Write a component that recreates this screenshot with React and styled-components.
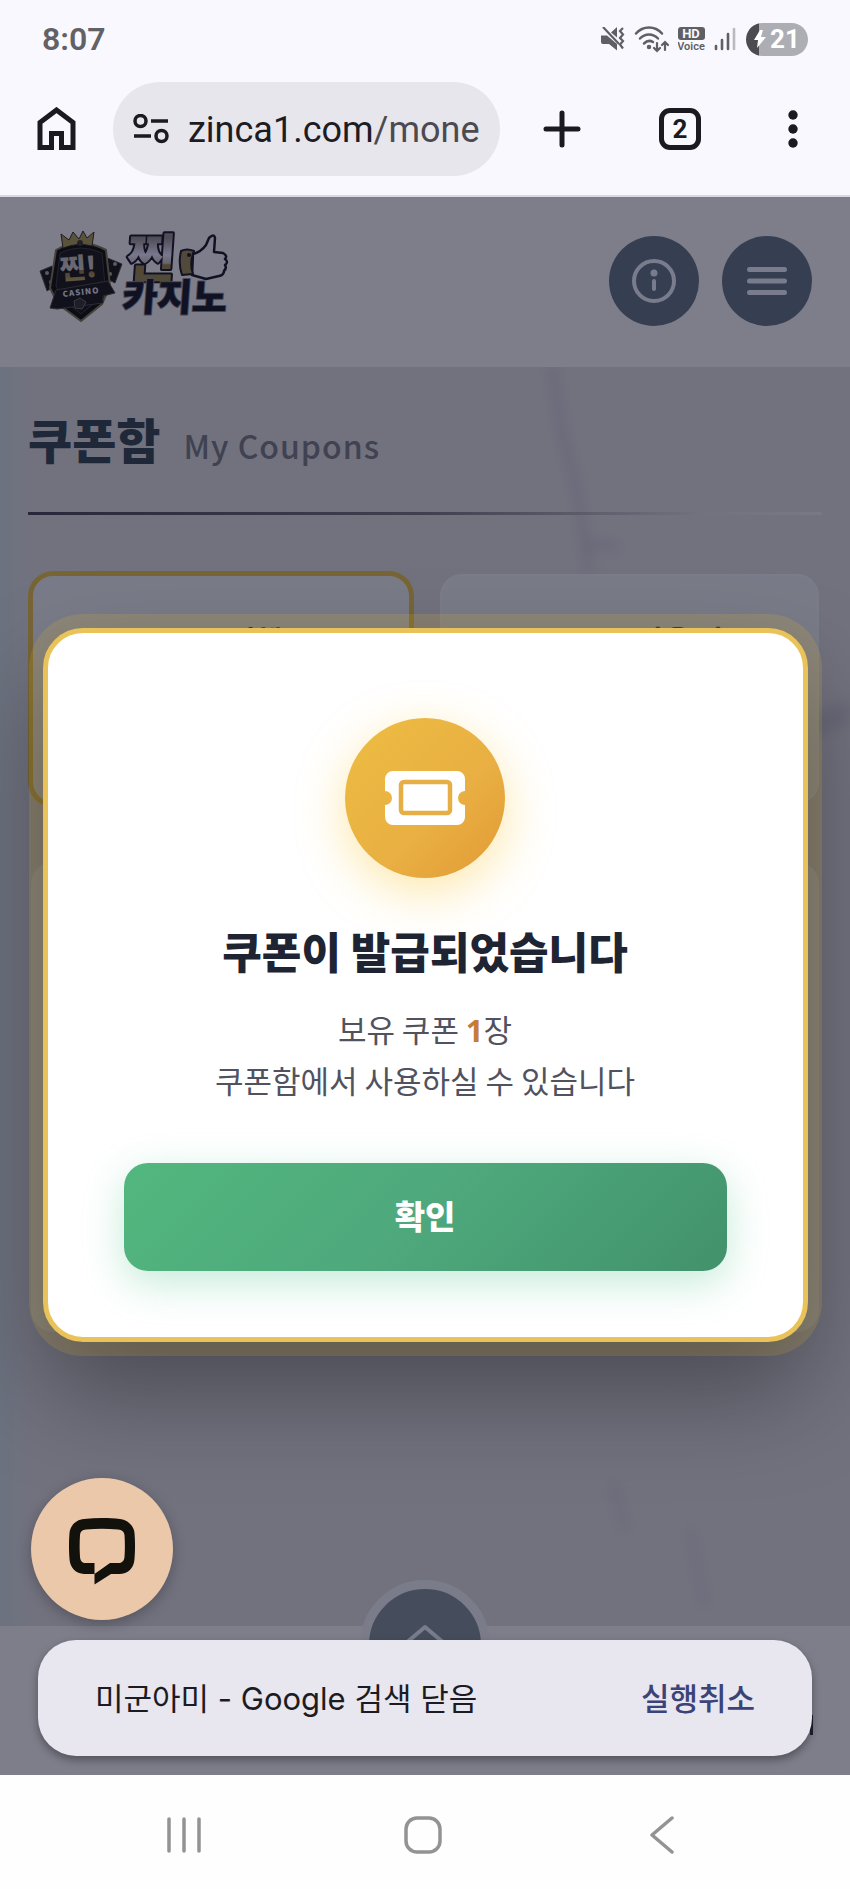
import React from "react";
import styled, { createGlobalStyle, css } from "styled-components";

const GlobalStyle = createGlobalStyle`
  * {
    box-sizing: border-box;
  }
  body {
    margin: 0;
    background: #ffffff;
    font-family: "Noto Sans CJK KR", "Noto Sans", sans-serif;
  }
  button {
    margin: 0;
    padding: 0;
    border: 0;
    background: none;
    font: inherit;
    color: inherit;
    cursor: pointer;
  }
  h1, h2, p {
    margin: 0;
  }
  svg {
    display: block;
    flex-shrink: 0;
  }
`;

/* ---------- icons ---------- */

const MuteIcon = () => (
  <svg width="25" height="24" viewBox="0 0 25 24" fill="#5f5f64">
    <path d="M0 8.500h6L16 17v6.500L8 17H2a2 2 0 0 1-2-2z" />
    <path d="M10 5.500 16 0v10.500z" />
    <path d="M2 0 18 17" stroke="#5f5f64" strokeWidth="2.200" />
    <path d="M22 1l-3 3 3 3.500-3 3.500 3 3-3 3.500 3 4" fill="none" stroke="#5f5f64" strokeWidth="2.200" />
  </svg>
);

const WifiIcon = () => (
  <svg width="36" height="27" viewBox="0 0 36 27" fill="none" stroke="#5f5f64" strokeWidth="2.500" strokeLinecap="round">
    <path d="M2 7.500C9-.5 21-.5 28 7.500" />
    <path d="M6 12.500c5-5.500 13-5.500 18 0" />
    <path d="M10 17.500c3-3 6.500-3 9-1.500" />
    <circle cx="15" cy="21" r="1" fill="#5f5f64" />
    <path d="M23 17v8M20 22l3 3 3-3M31 24v-8M28 19l3-3 3 3" strokeWidth="2.200" />
  </svg>
);

const HdVoiceIcon = () => (
  <svg width="28" height="28" viewBox="0 0 28 28" fontFamily="Roboto, sans-serif">
    <rect x="0" y="2" width="27" height="13" rx="3" fill="#5f5f64" />
    <text x="13" y="13" textAnchor="middle" fontSize="13" fontWeight="700" fill="#f9f8ff">HD</text>
    <text x="13" y="25" textAnchor="middle" fontSize="11" fontWeight="600" fill="#5f5f64">Voice</text>
  </svg>
);

const SignalIcon = () => (
  <svg width="24" height="24" viewBox="0 0 24 24" strokeWidth="2.600" strokeLinecap="round" stroke="#5f5f64">
    <path d="M2 19v3M8 13v9M14 7v15" />
    <path d="M20 2v20" stroke="#b9b9c0" />
  </svg>
);

const BoltIcon = () => (
  <svg width="12" height="18" viewBox="0 0 12 18" fill="#ffffff">
    <path d="M6 0 0 10h4L3 18 12 7H7l2-7z" />
  </svg>
);

const HomeIcon = () => (
  <svg width="39" height="44" viewBox="0 0 39 44" fill="none" stroke="#1b1a20" strokeWidth="5">
    <path d="M3 15.500 19.500 3 36 15.500V40.500H24.500V26.500H14.500V40.500H3z" />
  </svg>
);

const SiteSettingsIcon = () => (
  <svg width="36" height="30" viewBox="0 0 36 30" fill="none" stroke="#1b1a20" strokeWidth="3.500">
    <circle cx="7.500" cy="7" r="5.500" />
    <path d="M18 7h17M1 22h17" />
    <circle cx="28.500" cy="22" r="5.500" />
  </svg>
);

const PlusIcon = () => (
  <svg width="38" height="38" viewBox="0 0 38 38" stroke="#1b1a20" strokeWidth="5" strokeLinecap="round">
    <path d="M19 3v32M3 19h32" />
  </svg>
);

const MoreIcon = () => (
  <svg width="26" height="40" viewBox="0 0 26 40" fill="#1b1a20">
    <circle cx="14" cy="6" r="4.700" />
    <circle cx="14" cy="20" r="4.700" />
    <circle cx="14" cy="34" r="4.700" />
  </svg>
);

const InfoIcon = () => (
  <svg width="44" height="44" viewBox="0 0 44 44" fill="none" stroke="#f0f8ff" strokeWidth="4">
    <circle cx="22" cy="22" r="20" />
    <path d="M22 22v8" strokeLinecap="round" />
    <circle cx="22" cy="14" r="3.500" fill="#f0f8ff" stroke="none" />
  </svg>
);

const MenuIcon = () => (
  <svg width="40" height="30" viewBox="0 0 40 30" stroke="#f0f8ff" strokeWidth="5" strokeLinecap="round">
    <path d="M2.500 3.500h35M2.500 15h35M2.500 26.500h35" />
  </svg>
);

const TicketIcon = () => (
  <svg width="80" height="54" viewBox="0 0 80 54">
    <path
      fill="#ffffff"
      d="M8 0h64a8 8 0 0 1 8 8v12a7 7 0 0 0 0 14v12a8 8 0 0 1-8 8H8a8 8 0 0 1-8-8V34a7 7 0 0 0 0-14V8a8 8 0 0 1 8-8z"
    />
    <rect x="16" y="11" width="49" height="31" rx="3" fill="none" stroke="#e6af46" strokeWidth="4.500" />
  </svg>
);

const ChatIcon = () => (
  <svg width="66" height="68" viewBox="0 0 66 68">
    <path
      fill="#12110c"
      fillRule="evenodd"
      d="M15 1C27-.3 40-.3 51 1 59 2 65 8 65.500 15 66.200 24 66.200 32 65.500 41 65 50 59 56 50 56H42L25.500 66.500V56H15C7 55.500 1 50 .5 41-.2 32-.2 24 .5 15 1 8 7 1.500 15 1zM17 11.500C13 12 11.500 13.500 11 17 10.500 25 10.500 31 11 39 11.500 43 13 45 17 45H25.500V56L41 45H49C53 45 55 43 55.500 39 56 31 56 25 55.500 17 55 13.500 53 12 49 11.500 38 10.500 28 10.500 17 11.500z"
    />
  </svg>
);

const ChevronUpIcon = () => (
  <svg width="60" height="30" viewBox="0 0 60 30" fill="none" stroke="#f0f8ff" strokeWidth="4" strokeLinecap="round" strokeLinejoin="round">
    <path d="M4 26 30 4l26 22" />
  </svg>
);

const RecentsIcon = () => (
  <svg width="36" height="36" viewBox="0 0 36 36" stroke="#939396" strokeWidth="3.500" strokeLinecap="round">
    <path d="M3 2v32M18 2v32M33 2v32" />
  </svg>
);

const NavHomeIcon = () => (
  <svg width="38" height="38" viewBox="0 0 38 38" fill="none" stroke="#939396" strokeWidth="3.500">
    <rect x="2" y="2" width="34" height="34" rx="11" />
  </svg>
);

const BackIcon = () => (
  <svg width="24" height="38" viewBox="0 0 24 38" fill="none" stroke="#939396" strokeWidth="3.500" strokeLinecap="round" strokeLinejoin="round">
    <path d="M22 2 2 19l20 17" />
  </svg>
);

const Logo = () => (
  <svg
    width="196"
    height="150"
    viewBox="38 204 196 150"
    fontFamily="Noto Sans CJK KR, sans-serif"
    fontWeight="900"
    role="img"
    aria-label="찐카지노"
  >
    <defs>
      <linearGradient id="badgeGold" gradientUnits="userSpaceOnUse" x1="0" y1="251" x2="0" y2="279">
        <stop offset="0" stopColor="#c8c4bc" />
        <stop offset="0.6" stopColor="#d6d3cc" />
        <stop offset="0.62" stopColor="#94844a" />
        <stop offset="1" stopColor="#c4b26a" />
      </linearGradient>
      <linearGradient id="wordGold" gradientUnits="userSpaceOnUse" x1="0" y1="236" x2="0" y2="278">
        <stop offset="0" stopColor="#a09a94" />
        <stop offset="0.4" stopColor="#f2efff" />
        <stop offset="0.6" stopColor="#d0cac0" />
        <stop offset="0.64" stopColor="#a08d4c" />
        <stop offset="1" stopColor="#a59558" />
      </linearGradient>
    </defs>
    {/* dice */}
    <g fill="#20221c" stroke="#5a5a50" strokeWidth="1">
      <path d="M40 269l12-5 6 18-11 7z" />
      <path d="M105 255l17 7-7 19-14-7z" />
    </g>
    <g fill="#b5b3ae">
      <circle cx="47" cy="271" r="2" />
      <circle cx="51" cy="280" r="2" />
      <circle cx="115" cy="262" r="2" />
      <circle cx="110" cy="272" r="2" />
    </g>
    {/* shield */}
    <path d="M56 248q24-14 50 0l4 36-8 18-21 17-23-17-8-16z" fill="#181812" stroke="#8d8459" strokeWidth="2" />
    <path d="M60 251q20-10 42 0l3 32-7 15-17 14-18-14-7-14z" fill="#22231c" stroke="#45463b" strokeWidth="1" />
    {/* crown */}
    <path d="M63 246l-2-14 8 6 4-8 6 7 4-8 4 7 7-6-2 14q-14-4-29 2z" fill="#b5a75f" stroke="#3d3824" strokeWidth="1" />
    <circle cx="80" cy="241" r="3" fill="#4a4530" />
    <text x="60" y="276" fontSize="28" fill="url(#badgeGold)" transform="rotate(-4 80 268)">찐!</text>
    {/* ribbon */}
    <path d="M50 306l6-18 52-9 7 12-12 3v7l-46 6z" fill="#20221c" stroke="#54564f" strokeWidth="1" />
    <text x="81" y="293" fontSize="8" textAnchor="middle" letterSpacing="1" fill="#e9e9f2" transform="rotate(-6 81 290)">
      CASINO
    </text>
    <path d="M74 299l6-3 6 4-4 7-7-1z" fill="#3a3c36" stroke="#77746a" strokeWidth="1" />
    {/* word mark */}
    <g strokeLinejoin="round">
      <text x="126" y="275" fontSize="52" fill="url(#wordGold)" stroke="#22232c" strokeWidth="4" paintOrder="stroke" transform="skewX(-4) translate(19 0)">
        찐
      </text>
      <path
        d="M193 252q8-2 13-9l3-7q5-5 6 0l-1 14 9 1q5 3 2 6 4 3 0 6 2 3-1 6 0 4-5 5l-13 3-14-4z"
        fill="#fbfbff"
        stroke="#22232c"
        strokeWidth="2.500"
      />
      <path d="M181 249q6-3 13 0-5 12-1 23l-11 1q-4-11-1-24z" fill="#a3935a" stroke="#22232c" strokeWidth="2" />
      <circle cx="189" cy="253" r="2" fill="#22232c" />
      <text x="122" y="309" fontSize="38" fill="#20222a" stroke="#8e9199" strokeWidth="2" paintOrder="stroke" transform="skewX(-4) translate(21 0)">
        카지노
      </text>
    </g>
  </svg>
);

/* ---------- page ---------- */

const App = () => (
  <>
    <GlobalStyle />
    <Phone>
      <StatusBar>
        <Clock>8:07</Clock>
        <StatusIcons>
          <MuteIcon />
          <WifiIcon />
          <HdVoiceIcon />
          <SignalIcon />
          <Battery>
            <BoltIcon />
            21
          </Battery>
        </StatusIcons>
      </StatusBar>

      <Toolbar>
        <button aria-label="홈">
          <HomeIcon />
        </button>
        <AddressBar>
          <SiteSettingsIcon />
          <Address>
            zinca1.com<span>/mone</span>
          </Address>
        </AddressBar>
        <ToolbarActions>
          <button aria-label="새 탭">
            <PlusIcon />
          </button>
          <TabsButton>2</TabsButton>
          <button aria-label="메뉴">
            <MoreIcon />
          </button>
        </ToolbarActions>
      </Toolbar>

      <Viewport>
        <Marble viewBox="0 0 850 1578" preserveAspectRatio="none" aria-hidden="true">
          <g fill="none" stroke="#d2d2d8" strokeWidth="9" strokeLinecap="round">
            <path d="M553 172l8 60 16 60 8 55 5 25" />
            <path d="M585 347l30 2" />
            <path d="M614 1290l10 40" strokeWidth="10" stroke="#d8d8dc" />
            <path d="M690 1335l6 30 8 40" strokeWidth="8" stroke="#d8d8dc" />
            <path d="M850 515l-40 14" strokeWidth="24" />
          </g>
        </Marble>

        <Header>
          <Logo />
          <HeaderButtons>
            <RoundButton aria-label="안내">
              <InfoIcon />
            </RoundButton>
            <RoundButton aria-label="전체 메뉴">
              <MenuIcon />
            </RoundButton>
          </HeaderButtons>
        </Header>

        <Section>
          <SectionTitle>
            쿠폰함 <small>My Coupons</small>
          </SectionTitle>
          <Divider />
          <Cards>
            <Card $active>진행</Card>
            <Card>사용 완</Card>
          </Cards>
          <Panel />
        </Section>

        <Footer>
          <UpButton aria-label="맨 위로">
            <ChevronUpIcon />
          </UpButton>
          <FooterMark />
        </Footer>

        <Overlay>
          <Modal role="dialog" aria-labelledby="coupon-title">
            <CouponBadge>
              <TicketIcon />
            </CouponBadge>
            <ModalTitle id="coupon-title">쿠폰이 발급되었습니다</ModalTitle>
            <ModalText>
              보유 쿠폰 <strong>1</strong>장
              <br />
              쿠폰함에서 사용하실 수 있습니다
            </ModalText>
            <ConfirmButton>확인</ConfirmButton>
          </Modal>
        </Overlay>

        <Floating>
          <ChatButton aria-label="채팅">
            <ChatIcon />
          </ChatButton>
          <Toast>
            <p>미군아미 - Google 검색 닫음</p>
            <UndoButton>실행취소</UndoButton>
          </Toast>
        </Floating>
      </Viewport>

      <NavBar>
        <button aria-label="최근 앱">
          <RecentsIcon />
        </button>
        <button aria-label="홈 화면">
          <NavHomeIcon />
        </button>
        <button aria-label="뒤로">
          <BackIcon />
        </button>
      </NavBar>
    </Phone>
  </>
);

export default App;

const Phone = styled.div`
  display: flex;
  flex-direction: column;
  min-height: 100vh;
`;

const StatusBar = styled.div`
  display: flex;
  align-items: center;
  justify-content: space-between;
  height: 78px;
  padding: 0 42px;
  background: #f9f8ff;
`;

const Clock = styled.span`
  font: 600 32px/40px Roboto, sans-serif;
  color: #616166;
`;

const StatusIcons = styled.div`
  display: flex;
  align-items: center;
  gap: 8px;
`;

const Battery = styled.span`
  display: flex;
  align-items: center;
  justify-content: center;
  gap: 4px;
  width: 62px;
  height: 33px;
  border-radius: 17px;
  background: linear-gradient(90deg, #4b4b50 21%, #adadb4 21%);
  color: #ffffff;
  font: 700 26px/33px Roboto, sans-serif;
`;

const Toolbar = styled.div`
  display: flex;
  align-items: center;
  height: 119px;
  padding: 2px 45px 18px 37px;
  background: #f9f8ff;
  border-bottom: 2px solid #d8d8e2;
`;

const AddressBar = styled.div`
  display: flex;
  flex: 1;
  align-items: center;
  gap: 19px;
  min-width: 0;
  height: 94px;
  margin: 0 43px 0 37px;
  padding: 0 12px 0 20px;
  border-radius: 47px;
  background: #e7e6ec;
`;

const Address = styled.span`
  padding-top: 3px;
  white-space: nowrap;
  font: 400 36px/48px Roboto, sans-serif;
  color: #1d1c22;

  span {
    color: #4b4a50;
  }
`;

const ToolbarActions = styled.div`
  display: flex;
  align-items: center;
  gap: 78px;
`;

const TabsButton = styled.button`
  && {
    width: 42px;
    height: 42px;
    border: 5px solid #1b1a20;
    border-radius: 11px;
    color: #1b1a20;
    font: 700 26px/32px Roboto, sans-serif;
  }
`;

const Viewport = styled.main`
  position: relative;
  display: flex;
  flex: 1;
  flex-direction: column;
  overflow: hidden;
  background: linear-gradient(90deg, #d8e4e4, #e4e5e4 30px);
`;

const Marble = styled.svg`
  position: absolute;
  inset: 0;
  width: 100%;
  height: 100%;
  filter: blur(6px);
`;

const Header = styled.header`
  position: relative;
  display: flex;
  align-items: center;
  justify-content: space-between;
  height: 170px;
  padding: 0 38px 2px;
  background: #fdfdfd;
`;

const HeaderButtons = styled.div`
  display: flex;
  gap: 23px;
`;

const RoundButton = styled.button`
  display: grid;
  place-items: center;
  width: 90px;
  height: 90px;
  && {
    border-radius: 50%;
    background: #6c7e88;
  }
`;

const Section = styled.section`
  position: relative;
  padding: 36px 28px 0;
`;

const SectionTitle = styled.h1`
  display: flex;
  align-items: baseline;
  gap: 23px;
  height: 72px;
  font-size: 48px;
  font-weight: 900;
  line-height: 70px;
  color: #3e5058;

  small {
    font-size: 32px;
    font-weight: 500;
    line-height: 40px;
    letter-spacing: 1px;
    color: #808488;
  }
`;

const Divider = styled.div`
  height: 3px;
  margin: 37px 0 59px;
  background: linear-gradient(90deg, #50505a, #808088 50%, #e4e5e4 85%, #f2f2f2);
`;

const Cards = styled.div`
  display: grid;
  grid-template-columns: 1fr 1fr;
  gap: 29px;
  padding: 0 3px;
`;

const Card = styled.div`
  height: 230px;
  padding: 42px 0 0 196px;
  border: 2px solid #f4f8f6;
  border-radius: 22px;
  background: #f2f6f6;
  font-size: 29px;
  font-weight: 700;
  color: #404850;

  ${({ $active }) =>
    $active &&
    css`
      border-color: #eeca50;
      box-shadow: 0 0 0 3px #eeca50;
    `}
`;

const Panel = styled.div`
  height: 470px;
  margin: 58px 3px 0;
  border-radius: 22px;
  background: #f2f6f6;
`;

const Footer = styled.footer`
  position: relative;
  display: flex;
  align-items: flex-end;
  justify-content: flex-end;
  height: 149px;
  margin-top: auto;
  padding: 0 37px 40px;
  background: #fdfdfd;
`;

const UpButton = styled.button`
  position: absolute;
  top: -46px;
  left: 50%;
  display: flex;
  justify-content: center;
  width: 130px;
  height: 130px;
  transform: translateX(-50%);
  && {
    padding-top: 34px;
    border: 9px solid #f6f8fa;
    border-radius: 50%;
    background: #8a9aa0;
  }
`;

const FooterMark = styled.i`
  width: 3px;
  height: 20px;
  background: #404048;
`;

const Overlay = styled.div`
  position: absolute;
  inset: 0;
  display: grid;
  place-items: center;
  padding-bottom: 2px;
  background: rgba(0, 0, 26, 0.5);
`;

const Modal = styled.div`
  width: 90%;
  padding: 85px 76px 66px;
  border: 5px solid #eac25a;
  border-radius: 40px;
  background: #ffffff;
  box-shadow:
    0 0 0 14px rgba(250, 200, 30, 0.14),
    0 50px 100px rgba(0, 0, 0, 0.35);
  text-align: center;
`;

const CouponBadge = styled.div`
  display: grid;
  place-items: center;
  width: 160px;
  height: 160px;
  margin: 0 auto 42px;
  border-radius: 50%;
  background: linear-gradient(135deg, #edbd42, #e9af42 60%, #e29a35);
  box-shadow: 0 14px 50px rgba(250, 195, 40, 0.4);
`;

const ModalTitle = styled.h2`
  font-size: 43px;
  font-weight: 900;
  line-height: 60px;
  color: #1f2433;
`;

const ModalText = styled.p`
  && {
    margin: 24px 0 58px;
  }
  font-size: 31px;
  line-height: 50px;
  color: #50535f;

  strong {
    font-family: "Noto Sans", sans-serif;
    font-weight: 700;
    color: #c67c35;
  }
`;

const ConfirmButton = styled.button`
  width: 100%;
  height: 108px;
  && {
    padding-bottom: 4px;
    border-radius: 24px;
    background: linear-gradient(135deg, #52b77e, #4ea87c 50%, #42926b);
    box-shadow: 0 12px 40px rgba(60, 190, 130, 0.3);
    font-size: 33px;
    font-weight: 900;
    color: #ffffff;
  }
`;

const Floating = styled.div`
  position: absolute;
  right: 0;
  bottom: 0;
  left: 0;
  padding: 0 38px 19px 31px;
`;

const ChatButton = styled.button`
  display: grid;
  place-items: center;
  width: 142px;
  height: 142px;
  && {
    margin-bottom: 20px;
    padding-top: 6px;
    border-radius: 50%;
    background: #ecc8aa;
    box-shadow: 0 4px 14px rgba(0, 0, 0, 0.25);
  }
`;

const Toast = styled.div`
  display: flex;
  align-items: center;
  justify-content: space-between;
  height: 116px;
  margin-left: 7px;
  padding: 2px 57px 0;
  border-radius: 38px;
  background: #e8e6ee;
  box-shadow: 0 4px 8px rgba(0, 0, 0, 0.35);
  font-family: Inter, "Noto Sans CJK KR", sans-serif;
  font-size: 31px;
  line-height: 44px;
  color: #1d1b22;
`;

const UndoButton = styled.button`
  && {
    font-weight: 500;
    color: #3b4377;
  }
`;

const NavBar = styled.nav`
  display: grid;
  grid-template-columns: repeat(3, 1fr);
  place-items: center;
  height: 114px;
  padding: 5px 68px 0 64px;
  background: #fefefe;
`;
